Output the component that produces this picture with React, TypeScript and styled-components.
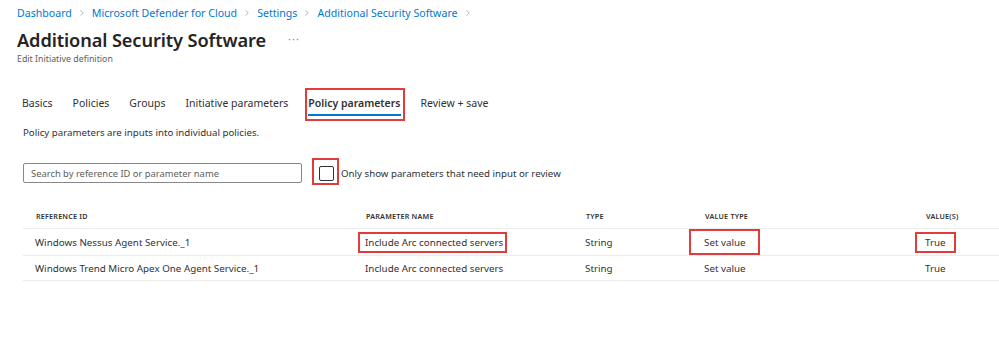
import { Fragment } from 'react';
import styled, { createGlobalStyle } from 'styled-components';
import { ChevronRight } from 'lucide-react';

const GlobalStyle = createGlobalStyle`
  html, body {
    margin: 0;
    padding: 0;
    background: #ffffff;
  }
  body {
    font-family: 'Noto Sans', 'Open Sans', Arial, sans-serif;
    color: #323130;
  }
`;

const Page = styled.div`
  width: 999px;
  height: 350px;
  overflow: hidden;
  box-sizing: border-box;
  padding-top: 4px;
`;

const Header = styled.div`
  padding-left: 17px;
`;

const Breadcrumb = styled.nav`
  display: flex;
  align-items: center;
  height: 18px;
  gap: 5px;
  font-size: 10.6px;
`;

const Crumb = styled.a`
  color: #0078d4;
  text-decoration: none;
`;

const Sep = styled.span`
  display: flex;
  align-items: center;
  color: #8a8886;
`;

const TitleRow = styled.div`
  display: flex;
  align-items: center;
  gap: 22px;
  margin-top: 4px;
  height: 28px;
`;

const Title = styled.h1`
  margin: 0;
  font-size: 18.2px;
  font-weight: 600;
  color: #252423;
  letter-spacing: -0.1px;
`;

const More = styled.span`
  color: #8a8886;
  font-size: 11px;
  letter-spacing: 1px;
  margin-top: -4px;
`;

const Subtitle = styled.div`
  font-size: 8.8px;
  color: #605e5c;
  margin-top: -1px;
`;

const Content = styled.div`
  padding-left: 22px;
`;

const Tabs = styled.div`
  display: flex;
  gap: 20px;
  margin-top: 30px;
  align-items: flex-start;
`;

const Tab = styled.div<{ $active?: boolean }>`
  font-size: 10.5px;
  line-height: 16px;
  padding-bottom: 3px;
  font-weight: ${(p) => (p.$active ? 600 : 400)};
  color: #323130;
  border-bottom: 2px solid ${(p) => (p.$active ? '#0078d4' : 'transparent')};
`;

const Mark = styled.span<{ $l: number; $r: number; $t: number; $b: number }>`
  position: relative;
  display: inline-block;
  &::after {
    content: '';
    position: absolute;
    left: ${(p) => -p.$l}px;
    right: ${(p) => -p.$r}px;
    top: ${(p) => -p.$t}px;
    bottom: ${(p) => -p.$b}px;
    border: 2px solid #e03c3c;
    pointer-events: none;
  }
`;

const Description = styled.p`
  margin: 10px 0 0 1px;
  font-size: 9.7px;
  line-height: 14px;
  color: #323130;
`;

const FilterRow = styled.div`
  display: flex;
  align-items: center;
  margin-top: 23px;
  margin-left: 1px;
  gap: 17px;
`;

const SearchBox = styled.div`
  width: 279px;
  height: 20px;
  box-sizing: border-box;
  border: 1px solid #8a8886;
  border-radius: 2px;
  display: flex;
  align-items: center;
  padding-left: 7px;
  font-size: 9.4px;
  color: #605e5c;
`;

const CheckLabel = styled.label`
  display: flex;
  align-items: center;
  gap: 7px;
  font-size: 9.7px;
  color: #323130;
`;

const Box = styled.span`
  display: block;
  width: 15px;
  height: 15px;
  box-sizing: border-box;
  border: 1px solid #323130;
  border-radius: 2px;
`;

const Table = styled.div`
  display: grid;
  grid-template-columns: 330px 220px 119px 221px 1fr;
  grid-template-rows: 26px 27px 25px;
  margin-top: 20px;
  margin-left: 1px;
`;

const HeadCell = styled.div`
  display: flex;
  align-items: center;
  padding-left: 13px;
  font-size: 7.2px;
  font-weight: 600;
  letter-spacing: 0.2px;
  color: #323130;
  border-bottom: 1px solid #edebe9;
`;

const Cell = styled.div`
  display: flex;
  align-items: center;
  padding-left: 12px;
  font-size: 9.8px;
  line-height: 13px;
  color: #323130;
  border-bottom: 1px solid #edebe9;
  white-space: nowrap;
`;

const crumbs = ['Dashboard', 'Microsoft Defender for Cloud', 'Settings', 'Additional Security Software'];

const tabs = ['Basics', 'Policies', 'Groups', 'Initiative parameters', 'Policy parameters', 'Review + save'];

const columns = ['REFERENCE ID', 'PARAMETER NAME', 'TYPE', 'VALUE TYPE', 'VALUE(S)'];

const rows = [
  { id: 'Windows Nessus Agent Service._1', name: 'Include Arc connected servers', type: 'String', valueType: 'Set value', value: 'True', marked: true },
  { id: 'Windows Trend Micro Apex One Agent Service._1', name: 'Include Arc connected servers', type: 'String', valueType: 'Set value', value: 'True', marked: false },
];

export default function App() {
  return (
    <Page>
      <GlobalStyle />
      <Header>
        <Breadcrumb>
          {crumbs.map((c) => (
            <Fragment key={c}>
              <Crumb>{c}</Crumb>
              <Sep>
                <ChevronRight size={10} strokeWidth={1.5} />
              </Sep>
            </Fragment>
          ))}
        </Breadcrumb>
        <TitleRow>
          <Title>Additional Security Software</Title>
          <More>···</More>
        </TitleRow>
        <Subtitle>Edit Initiative definition</Subtitle>
      </Header>
      <Content>
        <Tabs>
          {tabs.map((t) =>
            t === 'Policy parameters' ? (
              <Mark key={t} $l={3} $r={4} $t={7} $b={5}>
                <Tab $active>{t}</Tab>
              </Mark>
            ) : (
              <Tab key={t}>{t}</Tab>
            )
          )}
        </Tabs>
        <Description>Policy parameters are inputs into individual policies.</Description>
        <FilterRow>
          <SearchBox>Search by reference ID or parameter name</SearchBox>
          <CheckLabel>
            <Mark $l={7} $r={5} $t={8} $b={4}>
              <Box />
            </Mark>
            Only show parameters that need input or review
          </CheckLabel>
        </FilterRow>
        <Table>
          {columns.map((c) => (
            <HeadCell key={c}>{c}</HeadCell>
          ))}
          {rows.map((r) => (
            <Fragment key={r.id}>
              <Cell>{r.id}</Cell>
              <Cell>
                {r.marked ? <Mark $l={7} $r={4} $t={4} $b={4}>{r.name}</Mark> : r.name}
              </Cell>
              <Cell>{r.type}</Cell>
              <Cell>
                {r.marked ? <Mark $l={15} $r={14} $t={7} $b={6}>{r.valueType}</Mark> : r.valueType}
              </Cell>
              <Cell>
                {r.marked ? <Mark $l={10} $r={10} $t={4} $b={4}>{r.value}</Mark> : r.value}
              </Cell>
            </Fragment>
          ))}
        </Table>
      </Content>
    </Page>
  );
}
